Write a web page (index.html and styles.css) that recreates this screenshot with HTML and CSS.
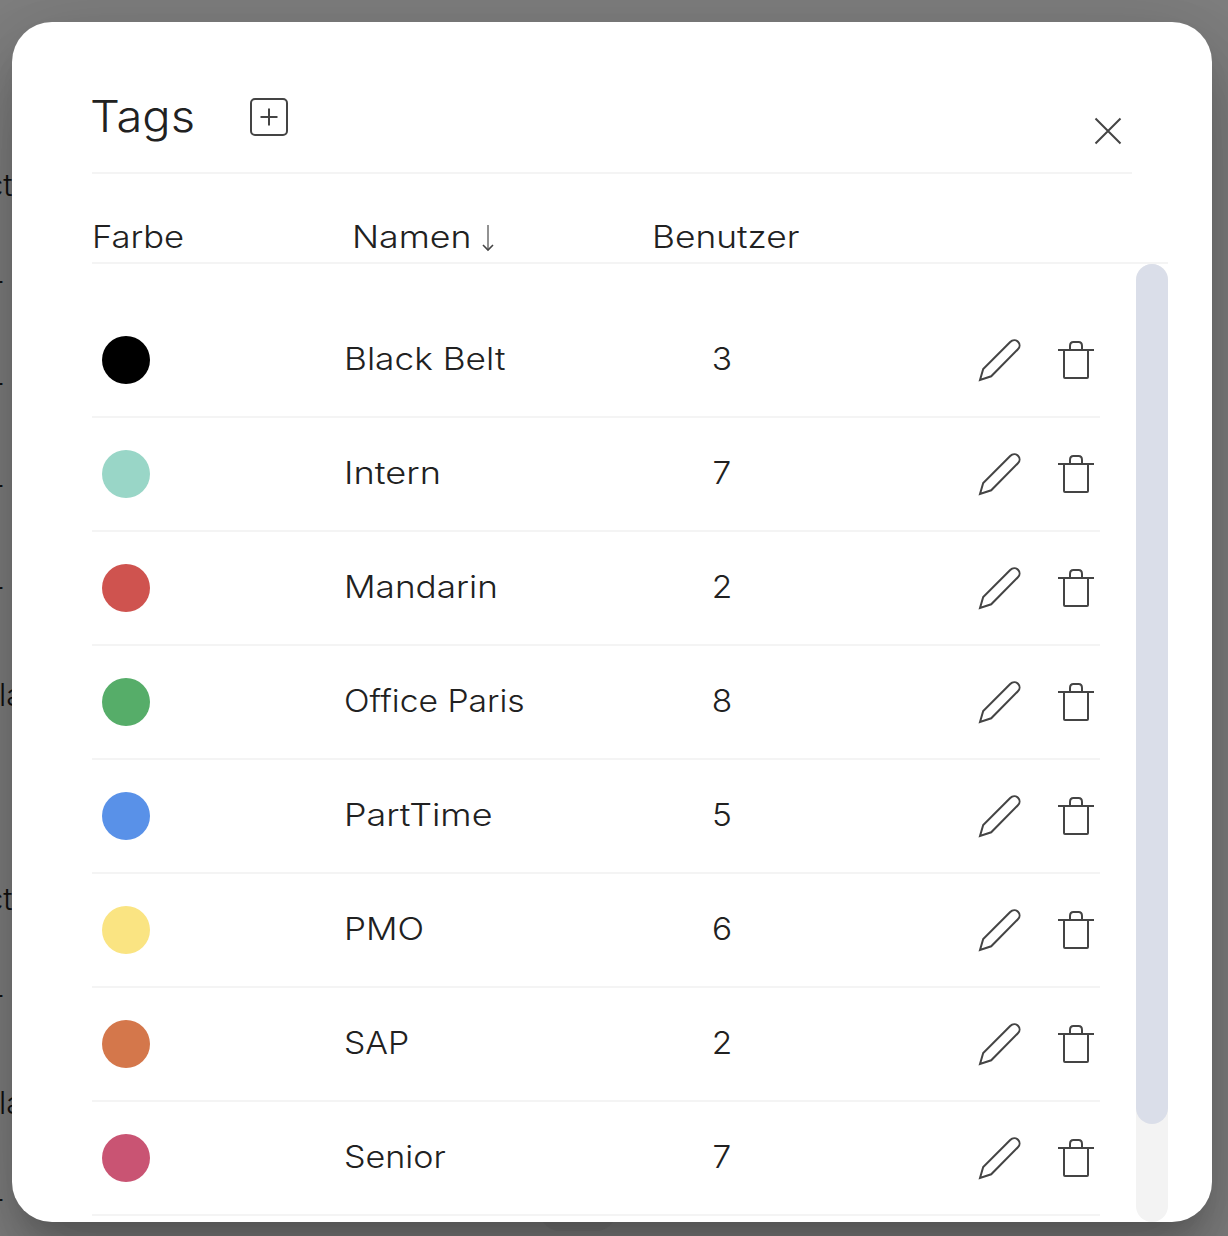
FILE: index.html
```html
<!DOCTYPE html>
<html lang="de">
<head>
<meta charset="utf-8">
<title>Tags</title>
<link rel="stylesheet" href="styles.css">
</head>
<body>
<svg class="sprite" aria-hidden="true">
  <symbol id="pencil" viewBox="0 0 44 44"><path d="M2 42 5.2 31 32.2 4C34.600 1.600 38 1.800 40 3.700C42 5.700 42.200 9 39.900 11.300L13.200 38.300Z"/></symbol>
  <symbol id="trash" viewBox="0 0 36 40"><path d="M0 10H36M6 10V37Q6 38 7 38H29Q30 38 30 37V10M12 10V6Q12 2 15.500 2H20.500Q24 2 24 6V10"/></symbol>
</svg>
<div class="page">
  <span class="cell ct">ct</span><span class="cell r">r</span><span class="cell r">r</span><span class="cell r">r</span><span class="cell r">r</span><span class="cell la">la</span><span class="cell"></span><span class="cell ct">ct</span><span class="cell r">r</span><span class="cell la">la</span><span class="cell r">r</span>
</div>
<div class="pager"></div>
<main class="dialog">
  <header class="head">
    <h1>Tags</h1>
    <svg class="add" viewBox="0 0 38 38"><rect x="1" y="1" width="36" height="36" rx="4"/><path d="M10.500 19H27.500M19 10.500V27.500"/></svg>
    <svg class="close" viewBox="0 0 28 28"><path d="M1.500 1.500 26.500 26.500M26.500 1.500 1.500 26.500"/></svg>
  </header>
  <div class="columns">
    <span class="farbe">Farbe</span>
    <div class="namen"><span class="label">Namen</span><svg class="sort" viewBox="0 0 12 28"><path class="stem" d="M6 1V26"/><path d="M1 21 6 26 11 21"/></svg></div>
    <span class="benutzer">Benutzer</span>
  </div>
  <div class="body">
    <div class="list">
      <div class="row"><i class="dot black"></i><span class="name n1">Black Belt</span><span class="count">3</span><svg class="pencil"><use href="#pencil"/></svg><svg class="trash"><use href="#trash"/></svg></div>
      <div class="row"><i class="dot mint"></i><span class="name n2">Intern</span><span class="count">7</span><svg class="pencil"><use href="#pencil"/></svg><svg class="trash"><use href="#trash"/></svg></div>
      <div class="row"><i class="dot red"></i><span class="name n3">Mandarin</span><span class="count">2</span><svg class="pencil"><use href="#pencil"/></svg><svg class="trash"><use href="#trash"/></svg></div>
      <div class="row"><i class="dot green"></i><span class="name n4">Office Paris</span><span class="count">8</span><svg class="pencil"><use href="#pencil"/></svg><svg class="trash"><use href="#trash"/></svg></div>
      <div class="row"><i class="dot blue"></i><span class="name n5">PartTime</span><span class="count">5</span><svg class="pencil"><use href="#pencil"/></svg><svg class="trash"><use href="#trash"/></svg></div>
      <div class="row"><i class="dot yellow"></i><span class="name n6">PMO</span><span class="count">6</span><svg class="pencil"><use href="#pencil"/></svg><svg class="trash"><use href="#trash"/></svg></div>
      <div class="row"><i class="dot orange"></i><span class="name n7">SAP</span><span class="count">2</span><svg class="pencil"><use href="#pencil"/></svg><svg class="trash"><use href="#trash"/></svg></div>
      <div class="row"><i class="dot pink"></i><span class="name n8">Senior</span><span class="count">7</span><svg class="pencil"><use href="#pencil"/></svg><svg class="trash"><use href="#trash"/></svg></div>
    </div>
    <div class="track"><div class="thumb"></div></div>
  </div>
</main>
</body>
</html>
```
FILE: styles.css
```css
* { box-sizing: border-box; }
body {
  margin: 0;
  height: 1236px;
  overflow: hidden;
  position: relative;
  background: #7f7f7f;
  color: #212121;
  font: 350 31px/40px Inter, "Liberation Sans", sans-serif;
}
svg { flex: none; fill: none; stroke: #444; stroke-width: 2; }
.sprite { position: absolute; width: 0; height: 0; }

/* page under the dialog */
.page { padding-top: 134px; width: 40px; overflow: hidden; color: #111; }
.cell { display: block; height: 102px; line-height: 102px; white-space: nowrap; }
.cell.ct { margin-left: -14px; }
.cell.r { margin-left: -8px; }
.cell.la { margin-left: -1px; }
.pager { position: absolute; left: 540px; top: 1191px; width: 76px; height: 40px; border-radius: 20px; background: #797979; }

.dialog {
  position: absolute;
  left: 12px;
  top: 22px;
  width: 1200px;
  height: 1200px;
  padding: 0 44px 0 80px;
  border-radius: 40px;
  overflow: hidden;
  background: #fff;
  box-shadow: 0 22px 30px -14px rgba(0,0,0,.2), 0 48px 76px 6px rgba(0,0,0,.14), 0 18px 92px 16px rgba(0,0,0,.12);
}
.head {
  display: flex;
  align-items: flex-start;
  width: 1040px;
  height: 152px;
  padding: 64px 10px 0 0;
  border-bottom: 2px solid #f4f4f4;
}
h1 { margin: 0; width: 158px; font-size: 44px; line-height: 60px; font-weight: 350; transform: translateX(-2px) scaleX(1.07); transform-origin: 0 0; }
.add { width: 38px; height: 38px; margin-top: 12px; }
.close { width: 28px; height: 28px; margin: 31px 0 0 auto; }

/* wide letterforms for labels */
.farbe, .label, .benutzer, .name { white-space: nowrap; transform-origin: 0 50%; }
.columns { display: flex; height: 90px; padding-top: 43px; border-bottom: 2px solid #f4f4f4; }
.farbe { width: 260px; transform: scaleX(1.115); }
.namen { width: 300px; display: flex; }
.label { width: 119px; transform: scaleX(1.15); }
.benutzer { transform: scaleX(1.14); }
.sort { width: 12px; height: 28px; margin: 7px 0 0 11px; stroke-width: 1.6; }
.stem { stroke: #777; }

.body { display: flex; justify-content: space-between; height: 958px; }
.list { width: 1008px; padding-top: 40px; }
.row { display: flex; align-items: center; height: 114px; padding: 0 6px 0 10px; border-bottom: 2px solid #f4f4f4; }
.dot { width: 48px; height: 48px; border-radius: 50%; }
.name { width: 316px; margin: 0 0 2px 194px; }
.count { width: 108px; margin: 0 0 2px 8px; text-align: center; transform: scaleX(1.08); }
.pencil { width: 44px; height: 44px; margin-left: 202px; }
.trash { width: 36px; height: 40px; margin-left: auto; }

.n1 { transform: scaleX(1.137); }
.n2 { transform: scaleX(1.168); }
.n3 { transform: scaleX(1.133); }
.n4 { transform: scaleX(1.086); }
.n5 { transform: scaleX(1.157); }
.n6 { transform: scaleX(1.13); }
.n7 { transform: scaleX(1.09); }
.n8 { transform: scaleX(1.1); }

.black { background: #000; }
.mint { background: #99d6c7; }
.red { background: #cf534f; }
.green { background: #56ad69; }
.blue { background: #5991e8; }
.yellow { background: #fae482; }
.orange { background: #d4774b; }
.pink { background: #c95473; }

.track { width: 32px; border-radius: 16px; background: #f3f3f3; }
.thumb { height: 860px; border-radius: 16px; background: #dadee9; }
```
